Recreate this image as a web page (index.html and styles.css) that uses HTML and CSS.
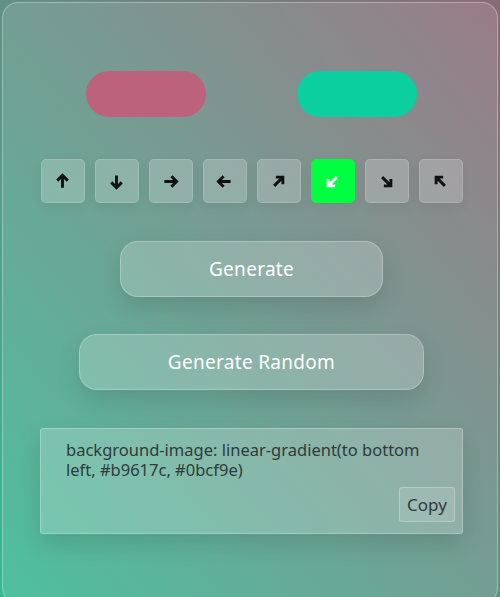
FILE: index.html
```html
<!DOCTYPE html>
<html>
<head>
<meta charset="utf-8">
<link rel="stylesheet" href="styles.css">
</head>
<body>
<div class="card">
  <div class="swatches">
    <div class="swatch pink"></div>
    <div class="swatch green"></div>
  </div>
  <div class="dirs">
    <button class="dir"><svg viewBox="0 0 24 24"><path d="M12 19V5M6 11l6-6 6 6"/></svg></button>
    <button class="dir"><svg viewBox="0 0 24 24"><path d="M12 5v14M6 13l6 6 6-6"/></svg></button>
    <button class="dir"><svg viewBox="0 0 24 24"><path d="M5 12h14M13 6l6 6-6 6"/></svg></button>
    <button class="dir"><svg viewBox="0 0 24 24"><path d="M19 12H5M11 6l-6 6 6 6"/></svg></button>
    <button class="dir"><svg viewBox="0 0 24 24"><path d="M7 17L17 7M9 7h8v8"/></svg></button>
    <button class="dir active"><svg viewBox="0 0 24 24"><path d="M17 7L7 17M7 9v8h8"/></svg></button>
    <button class="dir"><svg viewBox="0 0 24 24"><path d="M7 7l10 10M17 9v8H9"/></svg></button>
    <button class="dir"><svg viewBox="0 0 24 24"><path d="M17 17L7 7M7 15V7h8"/></svg></button>
  </div>
  <button class="btn gen">Generate</button>
  <button class="btn rand">Generate Random</button>
  <div class="output">
    <p class="code">background-image: linear-gradient(to bottom left, #b9617c, #0bcf9e)</p>
    <div class="copy-row"><button class="copy">Copy</button></div>
  </div>
</div>
</body>
</html>
```
FILE: styles.css
```css
* { box-sizing: border-box; }
html, body { margin: 0; height: 100%; }
body {
  font-family: "Noto Sans", "Open Sans", sans-serif;
  background: linear-gradient(to bottom left, #8c6a78, #36b891);
  padding: 2px;
  overflow: hidden;
}
.card {
  height: 602px;
  border-radius: 16px;
  border: 1px solid rgba(255,255,255,0.3);
  background: rgba(255,255,255,0.12);
  display: flex;
  flex-direction: column;
  align-items: center;
  padding-top: 68px;
  padding-left: 3px;
}
.swatches {
  display: flex;
  gap: 91px;
}
.swatch {
  width: 120px;
  height: 46px;
  border-radius: 23px;
}
.pink { background: #bc627d; }
.green { background: #0bcf9e; }
.dirs {
  display: flex;
  gap: 10px;
  margin-top: 42px;
}
.dir {
  width: 44px;
  height: 44px;
  border-radius: 5px;
  border: 1px solid rgba(255,255,255,0.15);
  background: rgba(255,255,255,0.2);
  display: flex;
  align-items: center;
  justify-content: center;
  padding: 0;
  box-shadow: 0 4px 12px rgba(0,0,0,0.06);
}
.dir svg {
  width: 21px;
  height: 21px;
  fill: none;
  stroke: #111;
  stroke-width: 3.3;
  stroke-linecap: butt;
  stroke-linejoin: miter;
}
.dir.active { background: #00ff41; border-color: #00ff41; }
.dir.active svg { stroke: #fff; }
.btn {
  font-family: inherit;
  font-size: 19px;
  letter-spacing: 0.3px;
  color: #fff;
  height: 56px;
  border-radius: 18px;
  border: 1px solid rgba(255,255,255,0.25);
  background: rgba(255,255,255,0.2);
  box-shadow: 0 10px 25px rgba(0,0,0,0.12);
}
.gen { width: 263px; margin-top: 38px; }
.rand { width: 345px; margin-top: 37px; }
.output {
  width: 423px;
  height: 106px;
  margin-top: 38px;
  border-radius: 3px;
  border: 1px solid rgba(255,255,255,0.25);
  background: rgba(255,255,255,0.2);
  box-shadow: 0 10px 25px rgba(0,0,0,0.12);
  padding: 11px 7px 0 25px;
  display: flex;
  flex-direction: column;
}
.code {
  margin: 0;
  font-size: 16.5px;
  line-height: 20px;
  color: #2f3b3a;
  padding-right: 10px;
}
.copy-row { display: flex; justify-content: flex-end; margin-top: 7px; }
.copy {
  font-family: inherit;
  font-size: 17px;
  color: #2f3b3a;
  width: 56px;
  height: 35px;
  border-radius: 3px;
  border: 1px solid rgba(255,255,255,0.25);
  background: rgba(255,255,255,0.12);
  padding: 0;
}
```
